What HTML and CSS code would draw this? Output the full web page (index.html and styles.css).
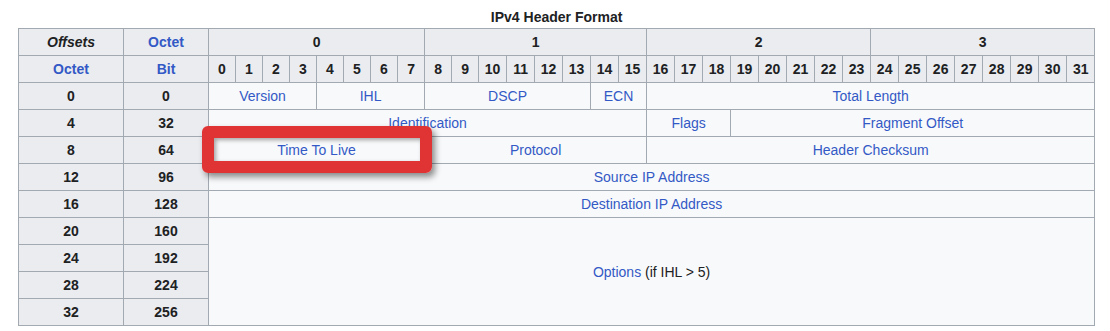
FILE: index.html
```html
<!DOCTYPE html>
<html lang="en">
<head>
  <meta charset="UTF-8">
  <title>IPv4 Header Format</title>
  <link rel="stylesheet" href="styles.css">
</head>
<body>

  <div class="folha">
    <table class="wikitable">
      <caption>IPv4 Header Format</caption>
      <colgroup>
        <col class="c-octet">
        <col class="c-bit">
      </colgroup>
      <colgroup id="bits"></colgroup>
      <thead>
        <tr>
          <th><i>Offsets</i></th>
          <th><a href="#">Octet</a></th>
          <th colspan="8">0</th>
          <th colspan="8">1</th>
          <th colspan="8">2</th>
          <th colspan="8">3</th>
        </tr>
        <tr id="linhaBits">
          <th><a href="#">Octet</a></th>
          <th><a href="#">Bit</a></th>
        </tr>
      </thead>
      <tbody>
        <tr>
          <th>0</th><th>0</th>
          <td colspan="4"><a href="#">Version</a></td>
          <td colspan="4"><a href="#">IHL</a></td>
          <td colspan="6"><a href="#">DSCP</a></td>
          <td colspan="2"><a href="#">ECN</a></td>
          <td colspan="16"><a href="#">Total Length</a></td>
        </tr>
        <tr>
          <th>4</th><th>32</th>
          <td colspan="16"><a href="#">Identification</a></td>
          <td colspan="3"><a href="#">Flags</a></td>
          <td colspan="13"><a href="#">Fragment Offset</a></td>
        </tr>
        <tr>
          <th>8</th><th>64</th>
          <td colspan="8"><a href="#">Time To Live</a></td>
          <td colspan="8"><a href="#">Protocol</a></td>
          <td colspan="16"><a href="#">Header Checksum</a></td>
        </tr>
        <tr>
          <th>12</th><th>96</th>
          <td colspan="32"><a href="#">Source IP Address</a></td>
        </tr>
        <tr>
          <th>16</th><th>128</th>
          <td colspan="32"><a href="#">Destination IP Address</a></td>
        </tr>
        <tr>
          <th>20</th><th>160</th>
          <td colspan="32" rowspan="4"><a href="#">Options</a> (if IHL &gt; 5)</td>
        </tr>
        <tr><th>24</th><th>192</th></tr>
        <tr><th>28</th><th>224</th></tr>
        <tr><th>32</th><th>256</th></tr>
      </tbody>
    </table>

    <!-- destaque sobre o campo TTL -->
    <div class="destaque"></div>
  </div>

  <script>
    // colunas e cabeçalho dos 32 bits
    const bits = document.getElementById('bits');
    const linhaBits = document.getElementById('linhaBits');
    for (let i = 0; i < 32; i++) {
      const col = document.createElement('col');
      col.className = i < 10 ? 'c-b1' : 'c-b2';
      bits.appendChild(col);
      const th = document.createElement('th');
      th.textContent = i;
      linhaBits.appendChild(th);
    }
  </script>

</body>
</html>
```

FILE: styles.css
```css
:root {
  --borda: #a2a9b1;
  --cabecalho: #eaecf0;
  --celula: #f8f9fa;
  --link: #3359c6;
  --texto: #202122;
  --vermelho: #e03434;
}
body {
  margin: 0;
  padding: 0;
  background-color: #ffffff;
  font-family: "Liberation Sans", Arial, sans-serif;
  color: var(--texto);
}
.folha {
  position: relative;
  padding: 6px 0 0 18px;
}
.wikitable {
  border-collapse: collapse;
  table-layout: fixed;
  width: 1076px;
  font-size: 14px;
  background-color: var(--celula);
  border: 1px solid var(--borda);
}
.wikitable caption {
  font-weight: bold;
  font-size: 14px;
  line-height: 22px;
  color: var(--texto);
}
.c-octet { width: 105px; }
.c-bit { width: 85px; }
.c-b1 { width: 27px; }
.c-b2 { width: 28px; }
.wikitable th, .wikitable td {
  border: 1px solid var(--borda);
  height: 26px;
  padding: 0;
  text-align: center;
  vertical-align: middle;
  white-space: nowrap;
  overflow: hidden;
}
.wikitable th {
  background-color: var(--cabecalho);
  font-weight: bold;
}
.wikitable a {
  color: var(--link);
  text-decoration: none;
}
.destaque {
  position: absolute;
  left: 202px;
  top: 126px;
  width: 206px;
  height: 23px;
  border: 12px solid var(--vermelho);
  border-radius: 6px;
  box-shadow: 3px 4px 6px rgba(0, 0, 0, 0.45), inset 2px 2px 4px rgba(0, 0, 0, 0.35);
}
```
